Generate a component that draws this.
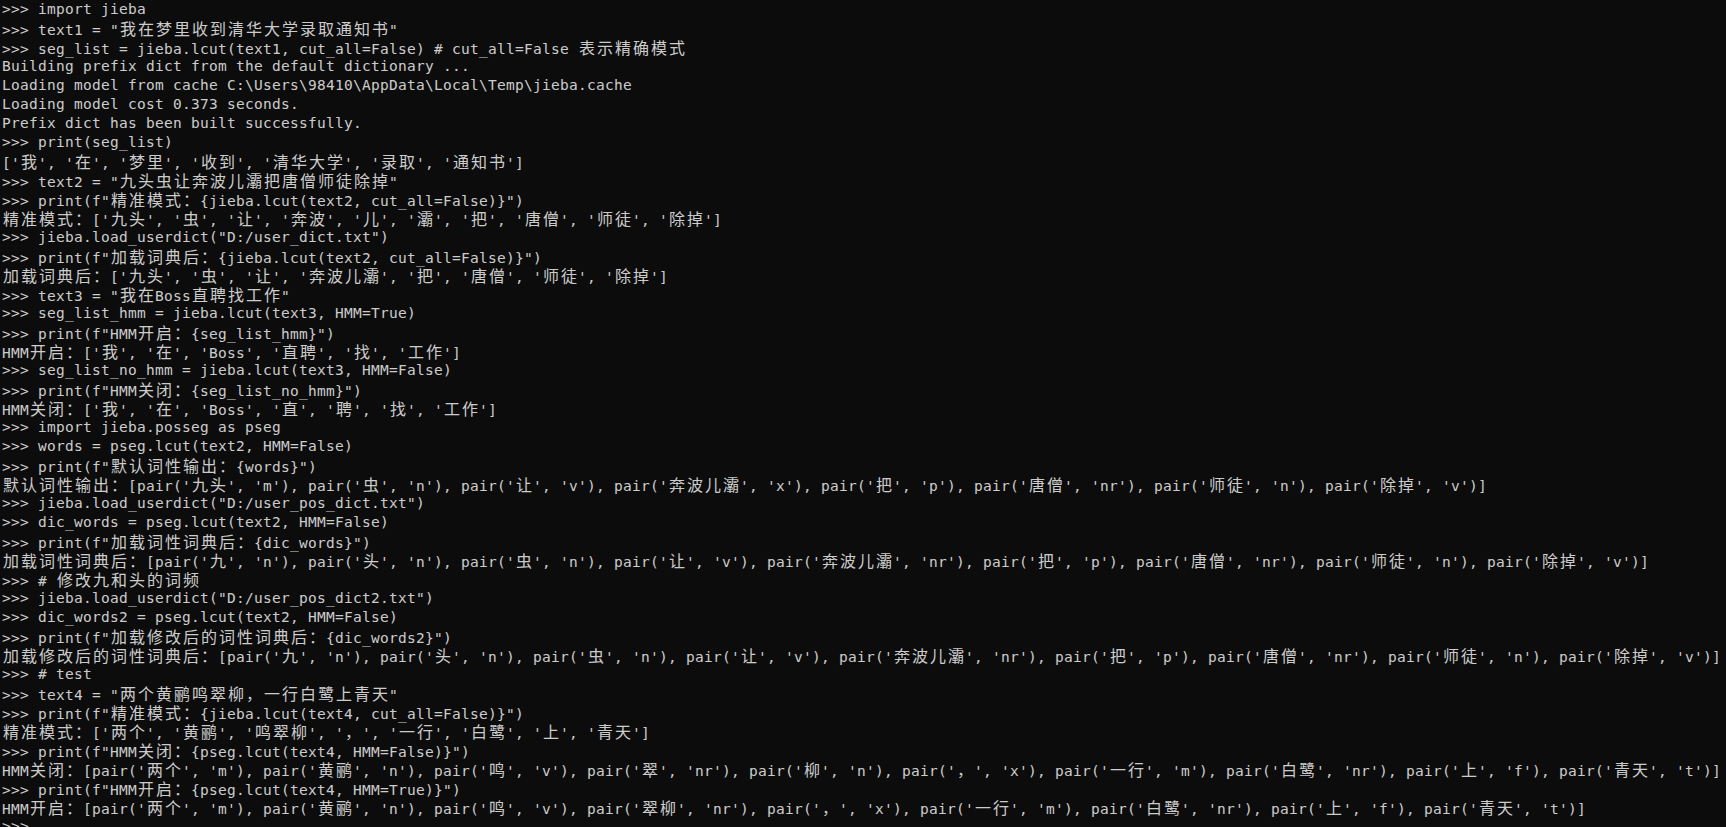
import React from 'react';

// 终端输出内容，逐行
const lines = [
  '>>> import jieba',
  '>>> text1 = "我在梦里收到清华大学录取通知书"',
  '>>> seg_list = jieba.lcut(text1, cut_all=False) # cut_all=False 表示精确模式',
  'Building prefix dict from the default dictionary ...',
  'Loading model from cache C:\\Users\\98410\\AppData\\Local\\Temp\\jieba.cache',
  'Loading model cost 0.373 seconds.',
  'Prefix dict has been built successfully.',
  '>>> print(seg_list)',
  "['我', '在', '梦里', '收到', '清华大学', '录取', '通知书']",
  '>>> text2 = "九头虫让奔波儿灞把唐僧师徒除掉"',
  '>>> print(f"精准模式：{jieba.lcut(text2, cut_all=False)}")',
  "精准模式：['九头', '虫', '让', '奔波', '儿', '灞', '把', '唐僧', '师徒', '除掉']",
  '>>> jieba.load_userdict("D:/user_dict.txt")',
  '>>> print(f"加载词典后：{jieba.lcut(text2, cut_all=False)}")',
  "加载词典后：['九头', '虫', '让', '奔波儿灞', '把', '唐僧', '师徒', '除掉']",
  '>>> text3 = "我在Boss直聘找工作"',
  '>>> seg_list_hmm = jieba.lcut(text3, HMM=True)',
  '>>> print(f"HMM开启：{seg_list_hmm}")',
  "HMM开启：['我', '在', 'Boss', '直聘', '找', '工作']",
  '>>> seg_list_no_hmm = jieba.lcut(text3, HMM=False)',
  '>>> print(f"HMM关闭：{seg_list_no_hmm}")',
  "HMM关闭：['我', '在', 'Boss', '直', '聘', '找', '工作']",
  '>>> import jieba.posseg as pseg',
  '>>> words = pseg.lcut(text2, HMM=False)',
  '>>> print(f"默认词性输出：{words}")',
  "默认词性输出：[pair('九头', 'm'), pair('虫', 'n'), pair('让', 'v'), pair('奔波儿灞', 'x'), pair('把', 'p'), pair('唐僧', 'nr'), pair('师徒', 'n'), pair('除掉', 'v')]",
  '>>> jieba.load_userdict("D:/user_pos_dict.txt")',
  '>>> dic_words = pseg.lcut(text2, HMM=False)',
  '>>> print(f"加载词性词典后：{dic_words}")',
  "加载词性词典后：[pair('九', 'n'), pair('头', 'n'), pair('虫', 'n'), pair('让', 'v'), pair('奔波儿灞', 'nr'), pair('把', 'p'), pair('唐僧', 'nr'), pair('师徒', 'n'), pair('除掉', 'v')]",
  '>>> # 修改九和头的词频',
  '>>> jieba.load_userdict("D:/user_pos_dict2.txt")',
  '>>> dic_words2 = pseg.lcut(text2, HMM=False)',
  '>>> print(f"加载修改后的词性词典后：{dic_words2}")',
  "加载修改后的词性词典后：[pair('九', 'n'), pair('头', 'n'), pair('虫', 'n'), pair('让', 'v'), pair('奔波儿灞', 'nr'), pair('把', 'p'), pair('唐僧', 'nr'), pair('师徒', 'n'), pair('除掉', 'v')]",
  '>>> # test',
  '>>> text4 = "两个黄鹂鸣翠柳，一行白鹭上青天"',
  '>>> print(f"精准模式：{jieba.lcut(text4, cut_all=False)}")',
  "精准模式：['两个', '黄鹂', '鸣翠柳', '，', '一行', '白鹭', '上', '青天']",
  '>>> print(f"HMM关闭：{pseg.lcut(text4, HMM=False)}")',
  "HMM关闭：[pair('两个', 'm'), pair('黄鹂', 'n'), pair('鸣', 'v'), pair('翠', 'nr'), pair('柳', 'n'), pair('，', 'x'), pair('一行', 'm'), pair('白鹭', 'nr'), pair('上', 'f'), pair('青天', 't')]",
  '>>> print(f"HMM开启：{pseg.lcut(text4, HMM=True)}")',
  "HMM开启：[pair('两个', 'm'), pair('黄鹂', 'n'), pair('鸣', 'v'), pair('翠柳', 'nr'), pair('，', 'x'), pair('一行', 'm'), pair('白鹭', 'nr'), pair('上', 'f'), pair('青天', 't')]",
  '>>> ',
];

// 中文字符占两格（18px），英文一格（9px）
const CJK = /([\u2E80-\u9FFF\u3000-\u303F\uFF00-\uFFEF]+)/;

function Line({ text }) {
  const parts = text.split(CJK);
  return (
    <div className="h-[19px] whitespace-pre leading-[19px]">
      {parts.map((p, i) =>
        i % 2 === 1 ? (
          <span
            key={i}
            className="text-[16px] tracking-[0px] [font-family:Noto_Sans_CJK_SC,Noto_Sans_CJK_JP,sans-serif]"
          >
            {Array.from(p).map((ch, j) => (
              <span key={j} className="inline-block w-[18px] text-center">
                {ch}
              </span>
            ))}
          </span>
        ) : (
          <span key={i}>{p}</span>
        )
      )}
    </div>
  );
}

export default function App() {
  return (
    <div className="h-[827px] w-full overflow-hidden bg-[#0c0c0c] pl-[2px] text-[14.5px] tracking-[0.27px] text-[#cccccc] [font-family:DejaVu_Sans_Mono,Liberation_Mono,monospace]">
      {lines.map((l, i) => (
        <Line key={i} text={l} />
      ))}
    </div>
  );
}
